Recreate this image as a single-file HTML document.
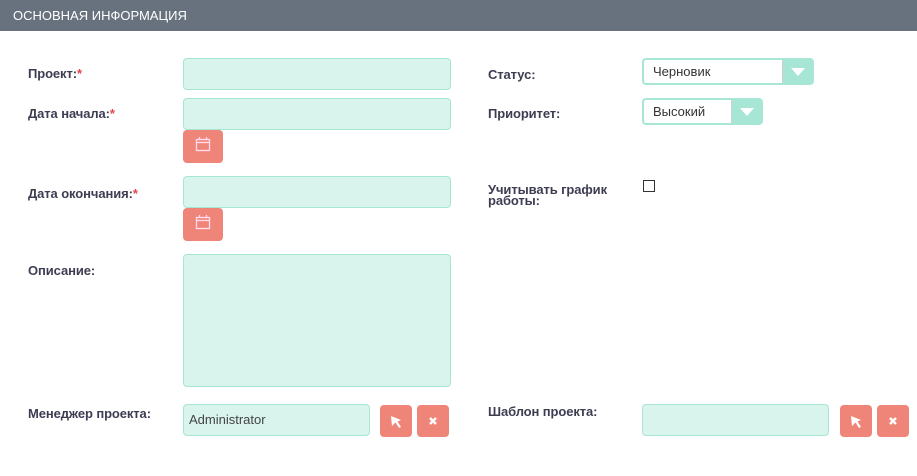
<!DOCTYPE html>
<html><head><meta charset="utf-8"><style>
*{box-sizing:border-box;margin:0;padding:0}
body{width:917px;height:476px;background:#fff;font-family:"Liberation Sans","DejaVu Sans",sans-serif;position:relative;overflow:hidden}
.hdr{position:absolute;left:0;top:0;width:917px;height:31px;background:#67727e;color:#fff;font-size:13px;line-height:31px;padding-left:13px}
.l{position:absolute;font-size:13px;font-weight:bold;color:#3d3d52;letter-spacing:-0.1px}
.l i{color:#e8424b;font-style:normal}
.in{position:absolute;background:#d9f4ed;border:1px solid #a7e6d4;border-radius:4px}
.btn{position:absolute;background:#ef8578;border-radius:4px}
.sel{position:absolute;background:#fff;border:2px solid #a7e6d4;border-radius:4px;font-size:13px;color:#333;padding-left:9px;line-height:23px}
.arr{position:absolute;right:0;top:0;bottom:0;width:30px;background:#a7e6d4;border-left:1px solid #d0d0d0}
.arr:after{content:"";position:absolute;left:8px;top:8px;border-left:7px solid transparent;border-right:7px solid transparent;border-top:8px solid #fff}
</style></head><body>
<div class="hdr">ОСНОВНАЯ ИНФОРМАЦИЯ</div>

<div class="l" style="left:28px;top:66px">Проект:<i>*</i></div>
<div class="in" style="left:183px;top:58px;width:268px;height:32px"></div>

<div class="l" style="left:28px;top:106px">Дата начала:<i>*</i></div>
<div class="in" style="left:183px;top:98px;width:268px;height:32px"></div>
<div class="btn" style="left:183px;top:130px;width:40px;height:33px"><svg width="40" height="33"><rect x="13.5" y="9.5" width="13" height="11" fill="none" stroke="#fde" stroke-width="1.3"/><line x1="13.5" y1="12.5" x2="26.5" y2="12.5" stroke="#fde" stroke-width="1.3"/><line x1="16.5" y1="7" x2="16.5" y2="10" stroke="#fde" stroke-width="1.3"/><line x1="23.5" y1="7" x2="23.5" y2="10" stroke="#fde" stroke-width="1.3"/></svg></div>

<div class="l" style="left:28px;top:186px">Дата окончания:<i>*</i></div>
<div class="in" style="left:183px;top:176px;width:268px;height:32px"></div>
<div class="btn" style="left:183px;top:208px;width:40px;height:33px"><svg width="40" height="33"><rect x="13.5" y="9.5" width="13" height="11" fill="none" stroke="#fde" stroke-width="1.3"/><line x1="13.5" y1="12.5" x2="26.5" y2="12.5" stroke="#fde" stroke-width="1.3"/><line x1="16.5" y1="7" x2="16.5" y2="10" stroke="#fde" stroke-width="1.3"/><line x1="23.5" y1="7" x2="23.5" y2="10" stroke="#fde" stroke-width="1.3"/></svg></div>

<div class="l" style="left:28px;top:263px">Описание:</div>
<div class="in" style="left:183px;top:254px;width:268px;height:133px"></div>

<div class="l" style="left:28px;top:406px">Менеджер проекта:</div>
<div class="in" style="left:183px;top:404px;width:187px;height:32px;font-size:13px;color:#444;line-height:30px;padding-left:5px">Administrator</div>
<div class="btn" style="left:380px;top:405px;width:32px;height:32px"><svg width="32" height="32"><path d="M11 11 L21 15 L17.5 16.5 L21 22 L19 23 L15.5 17.5 L12 21 Z" fill="#fff"/></svg></div>
<div class="btn" style="left:417px;top:405px;width:32px;height:32px"><svg width="32" height="32"><path d="M13 13 L19 19 M19 13 L13 19" stroke="#fff" stroke-width="2.4"/></svg></div>

<div class="l" style="left:488px;top:67px">Статус:</div>
<div class="sel" style="left:642px;top:58px;width:172px;height:27px">Черновик<div class="arr"></div></div>
<div class="l" style="left:488px;top:106px">Приоритет:</div>
<div class="sel" style="left:642px;top:98px;width:121px;height:27px">Высокий<div class="arr"></div></div>
<div class="l" style="left:488px;top:184px;line-height:11px">Учитывать график<br>работы:</div>
<div style="position:absolute;left:643px;top:180px;width:12px;height:12px;border:1px solid #333"></div>

<div class="l" style="left:488px;top:404px">Шаблон проекта:</div>
<div class="in" style="left:642px;top:404px;width:187px;height:32px"></div>
<div class="btn" style="left:840px;top:405px;width:32px;height:32px"><svg width="32" height="32"><path d="M11 11 L21 15 L17.5 16.5 L21 22 L19 23 L15.5 17.5 L12 21 Z" fill="#fff"/></svg></div>
<div class="btn" style="left:877px;top:405px;width:32px;height:32px"><svg width="32" height="32"><path d="M13 13 L19 19 M19 13 L13 19" stroke="#fff" stroke-width="2.4"/></svg></div>
</body></html>
